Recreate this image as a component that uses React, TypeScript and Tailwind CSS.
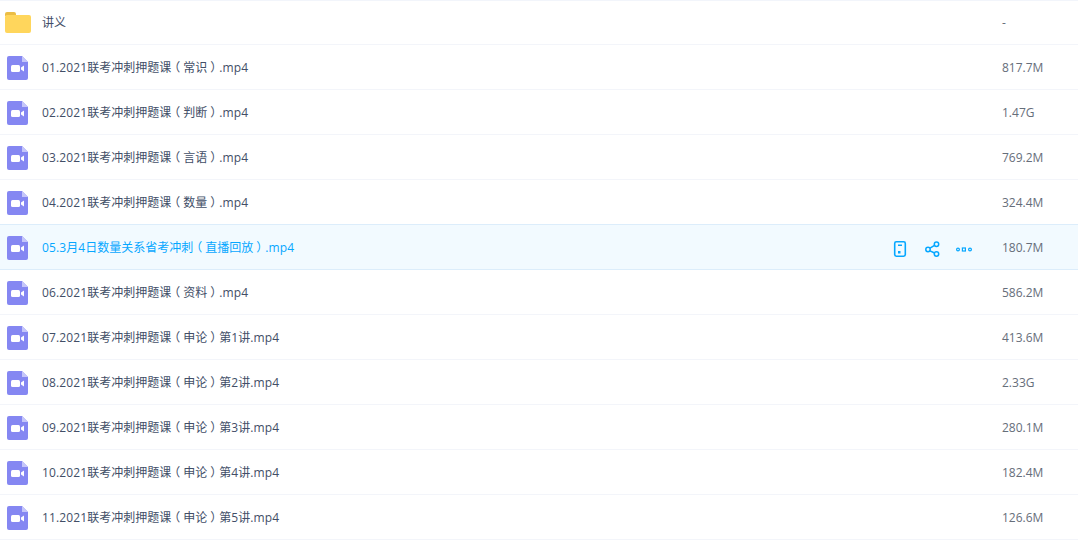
const rows = [
  ["讲义", "-"],
  ["01.2021联考冲刺押题课（常识）.mp4", "817.7M"],
  ["02.2021联考冲刺押题课（判断）.mp4", "1.47G"],
  ["03.2021联考冲刺押题课（言语）.mp4", "769.2M"],
  ["04.2021联考冲刺押题课（数量）.mp4", "324.4M"],
  ["05.3月4日数量关系省考冲刺（直播回放）.mp4", "180.7M"],
  ["06.2021联考冲刺押题课（资料）.mp4", "586.2M"],
  ["07.2021联考冲刺押题课（申论）第1讲.mp4", "413.6M"],
  ["08.2021联考冲刺押题课（申论）第2讲.mp4", "2.33G"],
  ["09.2021联考冲刺押题课（申论）第3讲.mp4", "280.1M"],
  ["10.2021联考冲刺押题课（申论）第4讲.mp4", "182.4M"],
  ["11.2021联考冲刺押题课（申论）第5讲.mp4", "126.6M"],
];

function Folder() {
  return (
    <svg width="26" height="21" viewBox="0 0 26 21" className="block">
      <path d="M0 2a2 2 0 0 1 2-2h7a2 2 0 0 1 2 2v2H0z" fill="#ebbd45" />
      <rect x="0" y="3" width="26" height="18" rx="2" fill="#ffd65c" />
    </svg>
  );
}

function Video() {
  return (
    <svg width="21" height="24" viewBox="0 0 21 24" className="block">
      <path d="M2 0h13l6 6v16a2 2 0 0 1-2 2H2a2 2 0 0 1-2-2V2a2 2 0 0 1 2-2z" fill="#8587f2" />
      <path d="M15 0l6 6h-6z" fill="#c5c6fa" />
      <rect x="4" y="9" width="9" height="7" rx="1.5" fill="#fff" />
      <path d="M14 11.5l3-2v6l-3-2z" fill="#fff" />
    </svg>
  );
}

function Actions() {
  return (
    <div className="flex items-center pt-[2px] text-[#06a7ff]">
      <svg width="14" height="16" viewBox="0 0 14 16" fill="none" className="block mr-[18px]">
        <rect x="1.7" y="0.8" width="10.6" height="14.4" rx="1.6" stroke="currentColor" strokeWidth="1.6" />
        <rect x="5" y="3.5" width="4" height="1.5" fill="currentColor" />
        <rect x="5" y="10" width="2.5" height="2.5" fill="currentColor" />
      </svg>
      <svg width="16" height="16" viewBox="0 0 16 16" fill="none" stroke="currentColor" strokeWidth="1.5" className="block mr-[15px]">
        <circle cx="3" cy="8.5" r="2.2" />
        <circle cx="11.5" cy="3.2" r="2.2" />
        <circle cx="11.5" cy="13" r="2.2" />
        <path d="M5 7.2l4.5-2.8M5 9.8l4.5 2.2" />
      </svg>
      <svg width="16" height="5" viewBox="0 0 16 5" fill="none" stroke="currentColor" strokeWidth="1.2" className="block">
        <circle cx="2" cy="2.5" r="1.4" />
        <rect x="6.4" y="1" width="3" height="3" />
        <circle cx="14" cy="2.5" r="1.4" />
      </svg>
    </div>
  );
}

function Name({ text }: { text: string }) {
  const parts = text.split(/([（）]|[\x00-\x7f]+)/).filter(Boolean);
  return (
    <>
      {parts.map((p, i) =>
        p === "（" || p === "）" ? (
          <span key={i} className="mx-[3px] [font-feature-settings:'halt']">{p}</span>
        ) : /^[\x00-\x7f]+$/.test(p) ? (
          <span key={i} className="tracking-[0.12px]">{p}</span>
        ) : (
          <span key={i}>{p}</span>
        )
      )}
    </>
  );
}

export default function App() {
  return (
    <div className="w-[1078px] h-[540px] overflow-hidden bg-white text-[12px] text-[#424e67] [font-family:'Open_Sans','Noto_Sans_CJK_SC',sans-serif]">
      {rows.map(([name, size], i) => {
        const active = i === 5;
        const beforeActive = i === 4;
        return (
          <div
            key={name}
            className={
              "flex items-center h-[45px] border-b " +
              (i === 0 ? "border-t border-t-[#f2f5fb] " : "pt-[2px] ") +
              (active ? "bg-[#f2faff] border-b-[#dcedfb] " : beforeActive ? "border-b-[#dcedfb] " : "border-b-[#f3f5fa] ")
            }
          >
            <div className="w-[42px] shrink-0 flex justify-start">
              {i === 0 ? (
                <div className="ml-[5px]"><Folder /></div>
              ) : (
                <div className="ml-[7px]"><Video /></div>
              )}
            </div>
            <div className={"flex-1 whitespace-nowrap " + (i === 0 ? "" : "pb-[1px] ") + (active ? "text-[#06a7ff]" : "")}><Name text={name} /></div>
            {active && <Actions />}
            <div className={"w-[76px] shrink-0 text-[#666e7a] " + (i === 0 ? "" : "pb-[1px]")} style={{ marginLeft: active ? 30 : 0 }}>{size}</div>
          </div>
        );
      })}
    </div>
  );
}
